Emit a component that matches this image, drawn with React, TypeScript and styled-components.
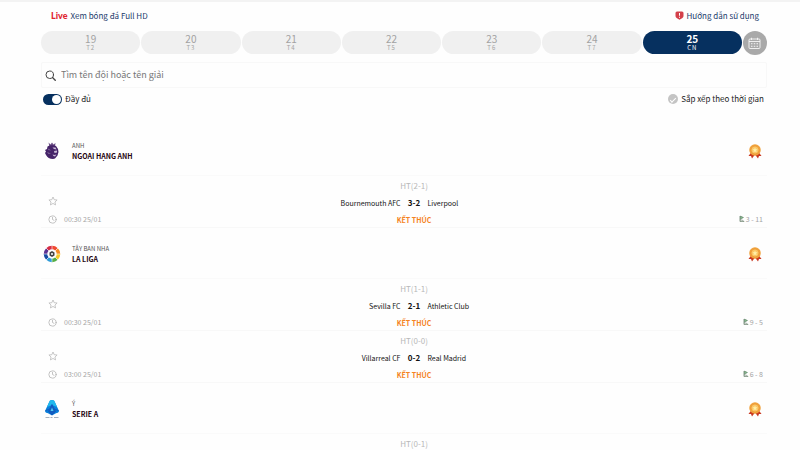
import React, { useState } from 'react';
import styled, { createGlobalStyle } from 'styled-components';

const GlobalStyle = createGlobalStyle`
  *, *::before, *::after { box-sizing: border-box; }
  body {
    margin: 0;
    background: #fefefe;
    color: #222;
    font-family: "Noto Sans CJK SC", "Noto Sans", sans-serif;
    font-size: 8px;
    line-height: 12px;
    overflow-x: hidden;
  }
  button, input { font: inherit; }
`;

const Page = styled.div`
  border-top: 2px solid #f3f3f3;
  padding: 0 33px 0 41px;
  height: 100vh;
  overflow: hidden;
`;

const TopBar = styled.header`
  display: flex;
  justify-content: space-between;
  align-items: center;
  height: 29px;
  padding: 0 8px 2px 10px;
`;

const TopLink = styled.a`
  display: flex;
  align-items: center;
  gap: 3px;
  color: #223a6b;
  text-decoration: none;
`;

const LiveMark = styled.strong`
  color: #e0252f;
  font-family: Lato, sans-serif;
  font-size: 9px;
  font-weight: 900;
`;

const DateBar = styled.nav`
  display: flex;
  gap: 1px;
`;

const DayButton = styled.button<{ $active: boolean }>`
  flex: 1;
  height: 23px;
  padding: 0;
  border: 0;
  border-radius: 12px;
  display: flex;
  flex-direction: column;
  align-items: center;
  justify-content: center;
  background: ${(p) => (p.$active ? '#06305f' : '#f0f0f0')};
  color: ${(p) => (p.$active ? '#fff' : '#a2a2a2')};
  font-weight: ${(p) => (p.$active ? 700 : 400)};
`;

const DayNumber = styled.span`
  font-size: 10px;
  line-height: 10px;
`;

const DayName = styled.span`
  font-size: 6px;
  line-height: 7px;
  font-weight: 400;
  letter-spacing: 1px;
`;

const CalendarButton = styled.button`
  width: 24px;
  height: 24px;
  padding: 0;
  border: 0;
  border-radius: 50%;
  background: #a9a9a9;
  display: grid;
  place-items: center;
`;

const SearchBox = styled.label`
  display: flex;
  align-items: center;
  gap: 5px;
  height: 26px;
  margin-top: 7px;
  padding: 0 3px;
  border: 1px solid #f8f8f8;
  border-radius: 2px;
`;

const SearchInput = styled.input`
  flex: 1;
  border: 0;
  outline: 0;
  padding: 0;
  background: transparent;
  font-size: 9px;
  line-height: 14px;
  color: #333;
  &::placeholder { color: #777; opacity: 1; }
`;

const Options = styled.div`
  display: flex;
  justify-content: space-between;
  align-items: center;
  height: 22px;
  padding: 0 3px 0 2px;
`;

const OptionLabel = styled.label`
  display: flex;
  align-items: center;
  gap: 3px;
`;

const Toggle = styled.input`
  appearance: none;
  width: 19px;
  height: 11px;
  margin: 0;
  border-radius: 6px;
  background: #ccc;
  display: flex;
  align-items: center;
  padding: 1px;
  &::before {
    content: "";
    width: 9px;
    height: 9px;
    border-radius: 50%;
    background: #fff;
  }
  &:checked { background: #06305f; justify-content: flex-end; }
`;

const RoundCheck = styled.input`
  appearance: none;
  width: 10px;
  height: 10px;
  margin: 0;
  border-radius: 50%;
  background: #c4c4c4;
  display: grid;
  place-items: center;
  &::before {
    content: "";
    width: 6px;
    height: 3px;
    border: solid #fff;
    border-width: 0 0 1px 1px;
    transform: rotate(-45deg);
  }
  &:checked { background: #06305f; }
`;

const Leagues = styled.main`
  padding-top: 15px;
`;

const LeagueHeader = styled.header`
  display: flex;
  align-items: center;
  height: 51px;
  padding: 2px 5px 0 2px;
  border-bottom: 1px solid #fafafa;
`;

const LeagueTitle = styled.div`
  flex: 1;
  margin-left: 11px;
`;

const Country = styled.div`
  font-size: 6px;
  line-height: 10px;
  color: #555;
`;

const LeagueName = styled.h2`
  margin: 0;
  font-size: 7px;
  line-height: 10px;
  font-weight: 700;
  color: #250410;
`;

const MatchRow = styled.article`
  display: grid;
  grid-template-columns: 80px 1fr 60px;
  height: 52px;
  padding-top: 1px;
  border-bottom: 1px solid #f8f8f8;
`;

const MatchSide = styled.div`
  display: flex;
  flex-direction: column;
  align-items: flex-start;
  justify-content: flex-end;
  gap: 6px;
  padding: 0 0 3px 7px;
  font-size: 7px;
  color: #a4a4a4;
`;

const MatchExtra = styled(MatchSide)`
  align-items: flex-end;
  padding: 0 4px 3px 0;
`;

const IconLine = styled.div<{ $gap: number }>`
  display: flex;
  align-items: center;
  gap: ${(p) => p.$gap}px;
  line-height: 12px;
`;

const StarButton = styled.button`
  display: flex;
  align-items: center;
  height: 12px;
  padding: 0;
  border: 0;
  background: none;
`;

const MatchCenter = styled.div`
  display: grid;
  grid-template-rows: 17px 17px 17px;
  align-items: center;
  text-align: center;
`;

const HalfTime = styled.div`
  font-size: 8px;
  color: #b8b8b8;
`;

const Teams = styled.div`
  display: grid;
  grid-template-columns: 1fr 27px 1fr;
  align-items: center;
  font-size: 7px;
  color: #111;
`;

const Home = styled.span`
  text-align: right;
`;

const Away = styled.span`
  text-align: left;
`;

const Score = styled.strong`
  font-size: 8px;
  font-weight: 700;
`;

const Status = styled.div`
  font-size: 7px;
  font-weight: 700;
  color: #f5841f;
`;

const StarIcon = () => (
  <svg width="10" height="10" viewBox="0 0 20 20" fill="none" stroke="#b5b5b5" strokeWidth="1.5" strokeLinejoin="round">
    <path d="M10 2l2.4 5.4 5.8.6-4.3 4 1.2 5.8-5.1-2.9-5.1 2.9 1.2-5.8-4.3-4 5.8-.6z" />
  </svg>
);

const ClockIcon = () => (
  <svg width="9" height="9" viewBox="0 0 18 18" fill="none" stroke="#b0b0b0" strokeWidth="1.5" strokeLinecap="round">
    <circle cx="9" cy="9" r="7.3" />
    <path d="M9 4.5V9l3 1.6" />
  </svg>
);

const CornerIcon = () => (
  <svg width="6" height="8" viewBox="0 0 12 16" fill="none">
    <path d="M2 2v11" stroke="#68806c" strokeWidth="1.6" />
    <path d="M3 2l6 3-6 3.500z" fill="#82b78a" stroke="#55775c" />
    <path d="M2 10c4 0 7 1 8 3H2" stroke="#68806c" strokeWidth="1.4" />
  </svg>
);

const SearchIcon = () => (
  <svg width="11" height="11" viewBox="0 0 22 22" fill="none" stroke="#444" strokeWidth="2" strokeLinecap="round">
    <circle cx="9.500" cy="9.500" r="7.500" />
    <path d="M15 15l5.500 5.500" strokeWidth="2.800" />
  </svg>
);

const AlertIcon = () => (
  <svg width="9" height="9" viewBox="0 0 18 18">
    <path d="M4 1h10a3 3 0 0 1 3 3v6c0 3-3 5-8 7.500C4 15 1 13 1 10V4a3 3 0 0 1 3-3z" fill="#d3404a" />
    <path d="M9 4v5.500M9 11.500v2" stroke="#fff" strokeWidth="2" />
  </svg>
);

const CalendarIcon = () => (
  <svg width="13" height="13" viewBox="0 0 26 26" fill="none" stroke="#f6f6f6" strokeWidth="1.800">
    <rect x="2" y="4" width="22" height="19" rx="2" />
    <path d="M2 9h22M7 1.500V6M19 1.500V6" />
    <path d="M6 13.500h3M11.500 13.500h3M17 13.500h3M6 18.500h3M11.500 18.500h3M17 18.500h3" strokeWidth="2.200" />
  </svg>
);

const MedalIcon = () => (
  <svg width="14" height="15" viewBox="0 0 28 30">
    <path d="M7 16L1 24l5 0 2 5 6-8 6 8 2-5 5 0-6-8z" fill="#c9371f" />
    <circle cx="14" cy="12" r="11.500" fill="#f0a23c" />
    <circle cx="14" cy="12" r="8" fill="#fbc766" />
    <circle cx="14" cy="12" r="8" fill="none" stroke="#e88f2c" strokeWidth="1.200" />
    <path d="M14 7l1.500 3.300 3.600.4-2.700 2.400.8 3.600-3.200-1.800-3.200 1.800.8-3.600-2.700-2.400 3.600-.4z" fill="#fff0a8" />
  </svg>
);

const PremierLogo = () => (
  <svg width="18" height="18" viewBox="0 0 36 36">
    <path d="M11 1l4 4 3-4 3 4 4-3-1 7-11 1z" fill="#6b4d85" />
    <path d="M9 9c5-4 13-3 17-1l4 6 1 6-2 7-5 6-4 1c-7 0-11-3-14-8l-2-4 2-3-2-3 4-2z" fill="#452368" />
    <path d="M19 11l6 0 2 4-5-1zM22 18l6-1 0 4-5 1zM19 25l4 1 4-1-3 4-3-1z" fill="#c9bad6" />
    <path d="M11 13l5 4-6-1zM8 20l8 3-5 1z" fill="#80679b" />
  </svg>
);

const LaLigaLogo = () => (
  <svg width="18" height="18" viewBox="0 0 36 36" fill="none" strokeWidth="7">
    <path d="M18 5a13 13 0 0 1 9.200 3.800" stroke="#f04a32" />
    <path d="M27.200 8.800A13 13 0 0 1 31 18" stroke="#f58b22" />
    <path d="M31 18a13 13 0 0 1-3.800 9.200" stroke="#f6c928" />
    <path d="M27.200 27.200A13 13 0 0 1 18 31" stroke="#55ad46" />
    <path d="M18 31a13 13 0 0 1-9.200-3.800" stroke="#309bd8" />
    <path d="M8.800 27.200A13 13 0 0 1 5 18" stroke="#174aa3" />
    <path d="M5 18a13 13 0 0 1 3.800-9.200" stroke="#5b3192" />
    <path d="M8.800 8.800A13 13 0 0 1 18 5" stroke="#d52c46" />
    <path d="M18 1v8M30 6l-6 6M35 18h-8M30 30l-6-6M18 35v-8M6 30l6-6M1 18h8M6 6l6 6" stroke="#fff" strokeWidth="1.200" />
    <path d="M18 12l5 3v6l-5 3-5-3v-6z" fill="#444" stroke="none" />
    <circle cx="18" cy="18" r="2" fill="#fff" stroke="none" />
  </svg>
);

const SerieALogo = () => (
  <svg width="18" height="20" viewBox="0 0 36 40">
    <path d="M18 2c4 0 5 2 7 7l7 15c0 3-4 4-7 5l-7 4-7-4c-3-1-7-2-7-5l7-15c2-5 3-7 7-7z" fill="#087fdb" />
    <path d="M18 2c4 0 5 2 7 7l3 7-10-4-10 4 3-7c2-5 3-7 7-7z" fill="#20b8ed" />
    <path d="M18 11l7 14-7 7-7-7zM5 23l10-3M31 23l-10-3" fill="#125cc0" stroke="#125cc0" strokeWidth="2" />
    <path d="M18 17l3 7h-6z" fill="#53c8ef" />
    <path d="M5 37h8M15 37h4M22 37h9" stroke="#8795a8" strokeWidth="1.500" />
  </svg>
);

interface Match {
  halfTime: string;
  detail?: {
    time: string;
    home: string;
    away: string;
    score: string;
    corners: string;
  };
}

interface League {
  country: string;
  name: string;
  Logo: () => React.ReactElement;
  matches: Match[];
}

const days = [
  ['19', 'T2'], ['20', 'T3'], ['21', 'T4'], ['22', 'T5'], ['23', 'T6'], ['24', 'T7'], ['25', 'CN'],
];

const leagues: League[] = [
  {
    country: 'ANH', name: 'NGOẠI HẠNG ANH', Logo: PremierLogo,
    matches: [
      { halfTime: '2-1', detail: { time: '00:30 25/01', home: 'Bournemouth AFC', away: 'Liverpool', score: '3-2', corners: '3 - 11' } },
    ],
  },
  {
    country: 'TÂY BAN NHA', name: 'LA LIGA', Logo: LaLigaLogo,
    matches: [
      { halfTime: '1-1', detail: { time: '00:30 25/01', home: 'Sevilla FC', away: 'Athletic Club', score: '2-1', corners: '9 - 5' } },
      { halfTime: '0-0', detail: { time: '03:00 25/01', home: 'Villarreal CF', away: 'Real Madrid', score: '0-2', corners: '6 - 8' } },
    ],
  },
  {
    country: 'Ý', name: 'SERIE A', Logo: SerieALogo,
    matches: [{ halfTime: '0-1' }],
  },
];

function MatchItem({ match: { halfTime, detail } }: { match: Match }) {
  return (
    <MatchRow>
      <MatchSide>
        {detail && (
          <>
            <StarButton aria-label="Yêu thích"><StarIcon /></StarButton>
            <IconLine $gap={7}><ClockIcon /><time>{detail.time}</time></IconLine>
          </>
        )}
      </MatchSide>
      <MatchCenter>
        <HalfTime>HT({halfTime})</HalfTime>
        {detail && (
          <>
            <Teams>
              <Home>{detail.home}</Home>
              <Score>{detail.score}</Score>
              <Away>{detail.away}</Away>
            </Teams>
            <Status>KẾT THÚC</Status>
          </>
        )}
      </MatchCenter>
      <MatchExtra>
        {detail && <IconLine $gap={1}><CornerIcon />{detail.corners}</IconLine>}
      </MatchExtra>
    </MatchRow>
  );
}

export default function App() {
  const [day, setDay] = useState('25');
  return (
    <>
      <GlobalStyle />
      <Page>
        <TopBar>
          <TopLink href="#live"><LiveMark>Live</LiveMark>Xem bóng đá Full HD</TopLink>
          <TopLink href="#guide"><AlertIcon />Hướng dẫn sử dụng</TopLink>
        </TopBar>
        <DateBar>
          {days.map(([number, name]) => (
            <DayButton key={number} $active={day === number} onClick={() => setDay(number)}>
              <DayNumber>{number}</DayNumber>
              <DayName>{name}</DayName>
            </DayButton>
          ))}
          <CalendarButton aria-label="Chọn ngày"><CalendarIcon /></CalendarButton>
        </DateBar>
        <SearchBox>
          <SearchIcon />
          <SearchInput type="text" aria-label="Tìm kiếm" placeholder="Tìm tên đội hoặc tên giải" />
        </SearchBox>
        <Options>
          <OptionLabel><Toggle type="checkbox" defaultChecked />Đầy đủ</OptionLabel>
          <OptionLabel><RoundCheck type="checkbox" />Sắp xếp theo thời gian</OptionLabel>
        </Options>
        <Leagues>
          {leagues.map(({ country, name, Logo, matches }) => (
            <section key={name}>
              <LeagueHeader>
                <Logo />
                <LeagueTitle>
                  <Country>{country}</Country>
                  <LeagueName>{name}</LeagueName>
                </LeagueTitle>
                <MedalIcon />
              </LeagueHeader>
              {matches.map((match) => <MatchItem key={match.halfTime} match={match} />)}
            </section>
          ))}
        </Leagues>
      </Page>
    </>
  );
}
